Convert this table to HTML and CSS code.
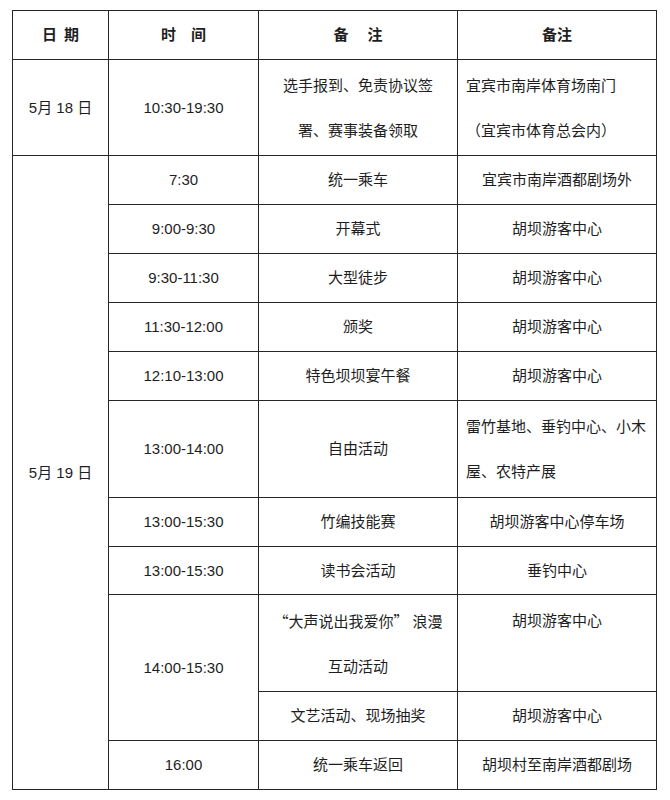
FILE: index.html
```html
<!DOCTYPE html>
<html lang="zh-CN">
<head>
<meta charset="utf-8">
<title>日程安排</title>
<link rel="stylesheet" href="styles.css">
</head>
<body>
<div class="page">
<table class="schedule">
  <colgroup>
    <col class="c-date">
    <col class="c-time">
    <col class="c-event">
    <col class="c-place">
  </colgroup>
  <thead>
    <tr class="h-head">
      <th><span class="sp1">日</span>期</th>
      <th><span class="sp2">时</span>间</th>
      <th><span class="sp3">备</span>注</th>
      <th>备注</th>
    </tr>
  </thead>
  <tbody>
    <tr class="h-double">
      <td>5月 18 日</td>
      <td>10:30-19:30</td>
      <td class="multi">选手报到、免责协议签<br>署、赛事装备领取</td>
      <td class="multi left">宜宾市南岸体育场南门<br>（宜宾市体育总会内）</td>
    </tr>
    <tr class="h-single">
      <td rowspan="11">5月 19 日</td>
      <td>7:30</td>
      <td>统一乘车</td>
      <td>宜宾市南岸酒都剧场外</td>
    </tr>
    <tr class="h-single">
      <td>9:00-9:30</td>
      <td>开幕式</td>
      <td>胡坝游客中心</td>
    </tr>
    <tr class="h-single">
      <td>9:30-11:30</td>
      <td>大型徒步</td>
      <td>胡坝游客中心</td>
    </tr>
    <tr class="h-single">
      <td>11:30-12:00</td>
      <td>颁奖</td>
      <td>胡坝游客中心</td>
    </tr>
    <tr class="h-single">
      <td>12:10-13:00</td>
      <td>特色坝坝宴午餐</td>
      <td>胡坝游客中心</td>
    </tr>
    <tr class="h-double2">
      <td>13:00-14:00</td>
      <td>自由活动</td>
      <td class="multi left">雷竹基地、垂钓中心、小木<br>屋、农特产展</td>
    </tr>
    <tr class="h-single">
      <td>13:00-15:30</td>
      <td>竹编技能赛</td>
      <td>胡坝游客中心停车场</td>
    </tr>
    <tr class="h-single48">
      <td>13:00-15:30</td>
      <td>读书会活动</td>
      <td>垂钓中心</td>
    </tr>
    <tr class="h-double2">
      <td rowspan="2">14:00-15:30</td>
      <td class="multi"><span class="cjk-q">“</span>大声说出我爱你<span class="cjk-q">”</span> 浪漫<br>互动活动</td>
      <td class="multi">胡坝游客中心<br>&nbsp;</td>
    </tr>
    <tr class="h-single">
      <td>文艺活动、现场抽奖</td>
      <td>胡坝游客中心</td>
    </tr>
    <tr class="h-single">
      <td>16:00</td>
      <td>统一乘车返回</td>
      <td>胡坝村至南岸酒都剧场</td>
    </tr>
  </tbody>
</table>
</div>
</body>
</html>
```

FILE: styles.css
```css
html, body {
  margin: 0;
  padding: 0;
  background: #ffffff;
}

.page {
  padding: 10px 0 0 12px;
}

.schedule {
  border-collapse: collapse;
  table-layout: fixed;
  width: 645px;
  font-family: "Liberation Sans", "Noto Sans CJK SC", sans-serif;
  font-size: 15px;
  color: #1e1e1e;
}

.c-date { width: 96px; }
.c-time { width: 150px; }
.c-event { width: 199px; }
.c-place { width: 199px; }

.schedule th,
.schedule td {
  border: 1px solid #262626;
  text-align: center;
  vertical-align: middle;
  padding: 0 6px;
  line-height: 20px;
  white-space: nowrap;
}

.schedule th {
  font-weight: bold;
}

.sp1 { margin-right: 7px; }
.sp2 { margin-right: 15px; }
.sp3 { margin-right: 19px; }

.schedule td.multi {
  line-height: 45px;
}

.schedule td.left {
  text-align: left;
  padding-left: 8px;
}

.cjk-q {
  font-family: "Noto Sans CJK SC", sans-serif;
  font-feature-settings: "fwid" 1;
}

.h-head { height: 49px; }
.h-double { height: 96px; }
.h-double2 { height: 97px; }
.h-single { height: 49px; }
.h-single48 { height: 48px; }
```
